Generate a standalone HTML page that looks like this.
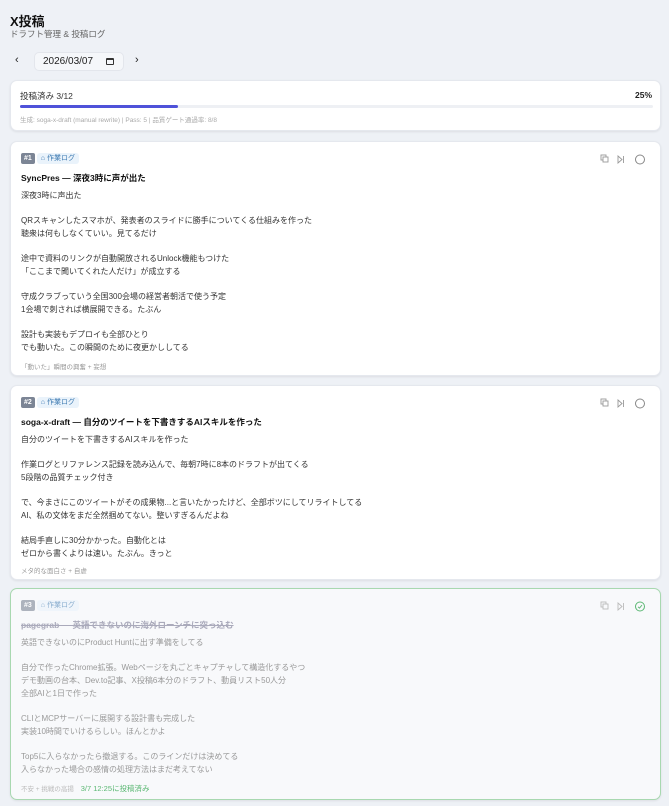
<!DOCTYPE html>
<html><head><meta charset="utf-8"><style>
*{box-sizing:border-box;margin:0;padding:0}
body{width:669px;height:806px;background:#eef1f6;font-family:"Liberation Sans","Noto Sans CJK JP",sans-serif;color:#222;position:relative;overflow:hidden}
.abs{position:absolute}
h1{position:absolute;left:10px;top:11px;font-size:13px;font-weight:700;color:#111}
.sub{left:10px;top:28px;font-size:8.5px;color:#666}
.nav{top:52px;height:19px;width:90px;left:34px;background:#f5f7fa;border:1px solid #e3e6ec;border-radius:5px;font-size:10px;color:#222;padding:3px 0 0 8px}
.card{position:absolute;left:10px;width:651px;background:#fff;border-radius:7px;box-shadow:0 1px 2px rgba(0,0,0,.08);border:1px solid #e5e8ee}
.tag{position:absolute;left:10px;top:11px;font-size:7px}
.num{display:inline-block;background:#7c8595;color:#fff;border-radius:2px;padding:1px 3px;font-weight:700;height:11px;line-height:9px}
.lbl{display:inline-block;background:#eaf3fb;color:#3b78b0;border-radius:3px;padding:1px 4px;margin-left:2px;height:11px;line-height:9px}
.title{position:absolute;left:10px;top:30px;font-size:8.5px;font-weight:700;color:#111}
.body{position:absolute;left:10px;top:48px;font-size:8px;line-height:12.65px;white-space:pre-line;color:#333}
.foot{position:absolute;left:10px;font-size:6.5px;color:#999}
.icons{position:absolute;right:14px;top:12px}
</style></head><body>
<h1>X投稿</h1>
<div class="abs sub">ドラフト管理 &amp; 投稿ログ</div>
<div class="abs" style="left:15px;top:54px;font-size:11px">‹</div>
<div class="abs nav">2026/03/07<span style="position:absolute;left:71px;top:5px;width:8px;height:7px;border:1px solid #333;border-top-width:2px;border-radius:1px"></span></div>
<div class="abs" style="left:135px;top:54px;font-size:11px">›</div>

<div class="card" style="top:80px;height:51px">
 <div class="abs" style="left:9px;top:9px;font-size:8.5px;color:#333">投稿済み 3/12</div>
 <div class="abs" style="right:8px;top:9px;font-size:8.5px;font-weight:700">25%</div>
 <div class="abs" style="left:9px;top:24px;width:633px;height:3px;background:#eef0f4;border-radius:2px"><div style="width:158px;height:3px;background:#4f52d9;border-radius:2px"></div></div>
 <div class="abs" style="left:9px;top:33px;font-size:6.5px;color:#aaa">生成: soga-x-draft (manual rewrite) | Pass: 5 | 品質ゲート通過率: 8/8</div>
</div>

<div class="card" style="top:141px;height:235px">
 <div class="tag"><span class="num">#1</span><span class="lbl">⌂ 作業ログ</span></div>
 <svg class="icons" width="46" height="11" viewBox="0 0 46 11"><g fill="none" stroke="#999" stroke-width="0.9"><rect x="1" y="1" width="5" height="5"/><rect x="3" y="3" width="5" height="5" fill="#fff"/><path d="M18 2l4 3.5-4 3.5zM23.5 2v7"/></g><circle cx="40" cy="5.5" r="4.5" fill="none" stroke="#888" stroke-width="1"/></svg>
 <div class="title">SyncPres — 深夜3時に声が出た</div>
 <div class="body">深夜3時に声出た

QRスキャンしたスマホが、発表者のスライドに勝手についてくる仕組みを作った
聴衆は何もしなくていい。見てるだけ

途中で資料のリンクが自動開放されるUnlock機能もつけた
「ここまで聞いてくれた人だけ」が成立する

守成クラブっていう全国300会場の経営者朝活で使う予定
1会場で刺されば横展開できる。たぶん

設計も実装もデプロイも全部ひとり
でも動いた。この瞬間のために夜更かししてる</div>
 <div class="foot" style="top:219px">「動いた」瞬間の興奮 + 妄想</div>
</div>

<div class="card" style="top:385px;height:195px">
 <div class="tag"><span class="num">#2</span><span class="lbl">⌂ 作業ログ</span></div>
 <svg class="icons" width="46" height="11" viewBox="0 0 46 11"><g fill="none" stroke="#999" stroke-width="0.9"><rect x="1" y="1" width="5" height="5"/><rect x="3" y="3" width="5" height="5" fill="#fff"/><path d="M18 2l4 3.5-4 3.5zM23.5 2v7"/></g><circle cx="40" cy="5.5" r="4.5" fill="none" stroke="#888" stroke-width="1"/></svg>
 <div class="title">soga-x-draft — 自分のツイートを下書きするAIスキルを作った</div>
 <div class="body">自分のツイートを下書きするAIスキルを作った

作業ログとリファレンス記録を読み込んで、毎朝7時に8本のドラフトが出てくる
5段階の品質チェック付き

で、今まさにこのツイートがその成果物...と言いたかったけど、全部ボツにしてリライトしてる
AI、私の文体をまだ全然掴めてない。整いすぎるんだよね

結局手直しに30分かかった。自動化とは
ゼロから書くよりは速い。たぶん。きっと</div>
 <div class="foot" style="top:179px">メタ的な面白さ + 自虐</div>
</div>

<div class="card" style="top:588px;height:212px;background:#f8f9fb;border:1px solid #a8d8b0">
 <div class="tag" style="opacity:.6"><span class="num">#3</span><span class="lbl">⌂ 作業ログ</span></div>
 <svg class="icons" width="46" height="11" viewBox="0 0 46 11"><g fill="none" stroke="#bbb" stroke-width="0.9"><rect x="1" y="1" width="5" height="5"/><rect x="3" y="3" width="5" height="5" fill="#f8f9fb"/><path d="M18 2l4 3.5-4 3.5zM23.5 2v7"/></g><circle cx="40" cy="5.5" r="4.5" fill="none" stroke="#5cb874" stroke-width="1"/><path d="M38 5.8l1.5 1.3 2.5-3" fill="none" stroke="#5cb874" stroke-width="0.9"/></svg>
 <div class="title" style="color:#aab;text-decoration:line-through">pagegrab — 英語できないのに海外ローンチに突っ込む</div>
 <div class="body" style="color:#999">英語できないのにProduct Huntに出す準備をしてる

自分で作ったChrome拡張。Webページを丸ごとキャプチャして構造化するやつ
デモ動画の台本、Dev.to記事、X投稿6本分のドラフト、動員リスト50人分
全部AIと1日で作った

CLIとMCPサーバーに展開する設計書も完成した
実装10時間でいけるらしい。ほんとかよ

Top5に入らなかったら撤退する。このラインだけは決めてる
入らなかった場合の感情の処理方法はまだ考えてない</div>
 <div class="foot" style="top:194px;color:#bbb">不安 + 挑戦の高揚 <span style="color:#5cb874;font-size:7.5px;margin-left:5px">3/7 12:25に投稿済み</span></div>
</div>
</body></html>
